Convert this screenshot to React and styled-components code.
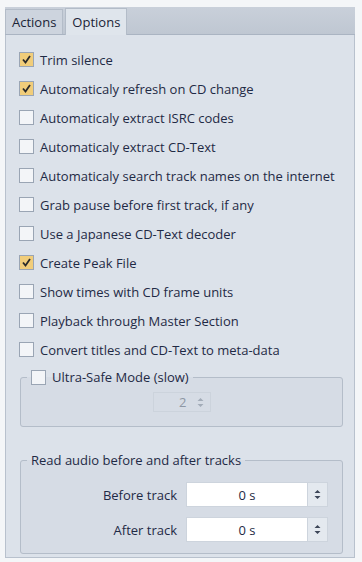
import React from "react";
import styled, { createGlobalStyle } from "styled-components";

const Global = createGlobalStyle`
    html, body {
        margin: 0;
        padding: 0;
        background: #f4f6f8;
    }
    body {
        font-family: "Open Sans", "DejaVu Sans", sans-serif;
        font-size: 13px;
        color: #1f2a45;
    }
`

const Window = styled.div`
    width: 362px;
    height: 562px;
    padding: 7px 7px 4px 5px;
    box-sizing: border-box;
    display: flex;
    flex-direction: column;
`

const TabBar = styled.div`
    display: flex;
    align-items: flex-end;
    height: 27px;
    background: linear-gradient(#c9d0da, #bfc7d2);
    border-bottom: 1px solid #aab4c2;
`

const Tab = styled.div`
    height: ${p => (p.active ? "27px" : "25px")};
    padding: 0 6px;
    margin-right: 2px;
    display: flex;
    align-items: center;
    box-sizing: border-box;
    border: 1px solid #b3bcc8;
    border-bottom: none;
    background: ${p => (p.active ? "#dfe5ec" : "#cdd4de")};
    margin-bottom: ${p => (p.active ? "-1px" : "0")};
    color: #1b2336;
`

const Panel = styled.div`
    flex: 1;
    background: #dce2ea;
    border: 1px solid #b8c1cd;
    border-top: none;
    padding: 10px 12px 0 13px;
    display: flex;
    flex-direction: column;
`

const Row = styled.label`
    display: flex;
    align-items: center;
    gap: 6px;
    height: 29px;
    white-space: nowrap;
`

const Box = styled.span`
    width: 13px;
    height: 13px;
    flex: none;
    border: 1px solid #9aa5b4;
    background: ${p => (p.checked ? "#f1cd7a" : "#f3f5f8")};
    display: flex;
    align-items: center;
    justify-content: center;
`

const Group = styled.fieldset`
    margin: 0 0 0 1px;
    padding: 0;
    width: 323px;
    box-sizing: border-box;
    border: 1px solid #b4bdc9;
    border-radius: 3px;
    background: #d6dce5;
`

const Legend = styled.legend`
    margin-left: 6px;
    padding: 0 4px;
    display: flex;
    align-items: center;
    gap: 6px;
`

const CenterArea = styled.div`
    display: flex;
    justify-content: center;
    padding: 6px 0 14px;
`

const SmallSpin = styled.div`
    width: 58px;
    height: 20px;
    display: flex;
    align-items: center;
    justify-content: flex-end;
    gap: 10px;
    padding-right: 6px;
    box-sizing: border-box;
    border: 1px solid #ccd3dc;
    color: #8e97a4;
`

const FieldGrid = styled.div`
    display: grid;
    grid-template-columns: 156px 142px;
    column-gap: 9px;
    row-gap: 10px;
    padding: 13px 0 11px;
    align-items: center;
`

const FieldLabel = styled.div`
    text-align: right;
`

const SpinField = styled.div`
    display: flex;
    height: 23px;
    border: 1px solid #cdd4dd;
`

const SpinValue = styled.div`
    flex: 1;
    background: #ffffff;
    display: flex;
    align-items: center;
    justify-content: center;
`

const SpinButtons = styled.div`
    width: 19px;
    background: #e4e9ef;
    border-left: 1px solid #cdd4dd;
    display: flex;
    align-items: center;
    justify-content: center;
`

const Gap = styled.div`
    height: ${p => p.h}px;
    flex: none;
`

const Check = () => (
    <svg width="11" height="11" viewBox="0 0 11 11">
        <path d="M2 5.5 L4.5 8.5 L9 2" fill="none" stroke="#2a2a2a" strokeWidth="1.8" />
    </svg>
)

const Arrows = ({ color }) => (
    <svg width="7" height="11" viewBox="0 0 7 11">
        <path d="M0.5 4 L3.5 1 L6.5 4 Z M0.5 7 L3.5 10 L6.5 7 Z" fill={color} />
    </svg>
)

const CheckRow = ({ checked, children }) => (
    <Row>
        <Box checked={checked}>{checked && <Check />}</Box>
        {children}
    </Row>
)

const options = [
    ["Trim silence", true],
    ["Automaticaly refresh on CD change", true],
    ["Automaticaly extract ISRC codes", false],
    ["Automaticaly extract CD-Text", false],
    ["Automaticaly search track names on the internet", false],
    ["Grab pause before first track, if any", false],
    ["Use a Japanese CD-Text decoder", false],
    ["Create Peak File", true],
    ["Show times with CD frame units", false],
    ["Playback through Master Section", false],
    ["Convert titles and CD-Text to meta-data", false],
]

const App = () => {
    return (
        <>
            <Global />
            <Window>
                <TabBar>
                    <Tab>Actions</Tab>
                    <Tab active>Options</Tab>
                </TabBar>
                <Panel>
                    {options.map(([text, checked]) => (
                        <CheckRow key={text} checked={checked}>{text}</CheckRow>
                    ))}
                    <Gap h={4} />
                    <Group>
                        <Legend>
                            <Box />
                            Ultra-Safe Mode (slow)
                        </Legend>
                        <CenterArea>
                            <SmallSpin>
                                2
                                <Arrows color="#a3acb8" />
                            </SmallSpin>
                        </CenterArea>
                    </Group>
                    <Gap h={24} />
                    <Group>
                        <Legend>Read audio before and after tracks</Legend>
                        <FieldGrid>
                            <FieldLabel>Before track</FieldLabel>
                            <SpinField>
                                <SpinValue>0 s</SpinValue>
                                <SpinButtons><Arrows color="#3d4658" /></SpinButtons>
                            </SpinField>
                            <FieldLabel>After track</FieldLabel>
                            <SpinField>
                                <SpinValue>0 s</SpinValue>
                                <SpinButtons><Arrows color="#3d4658" /></SpinButtons>
                            </SpinField>
                        </FieldGrid>
                    </Group>
                </Panel>
            </Window>
        </>
    );
}

export default App;
